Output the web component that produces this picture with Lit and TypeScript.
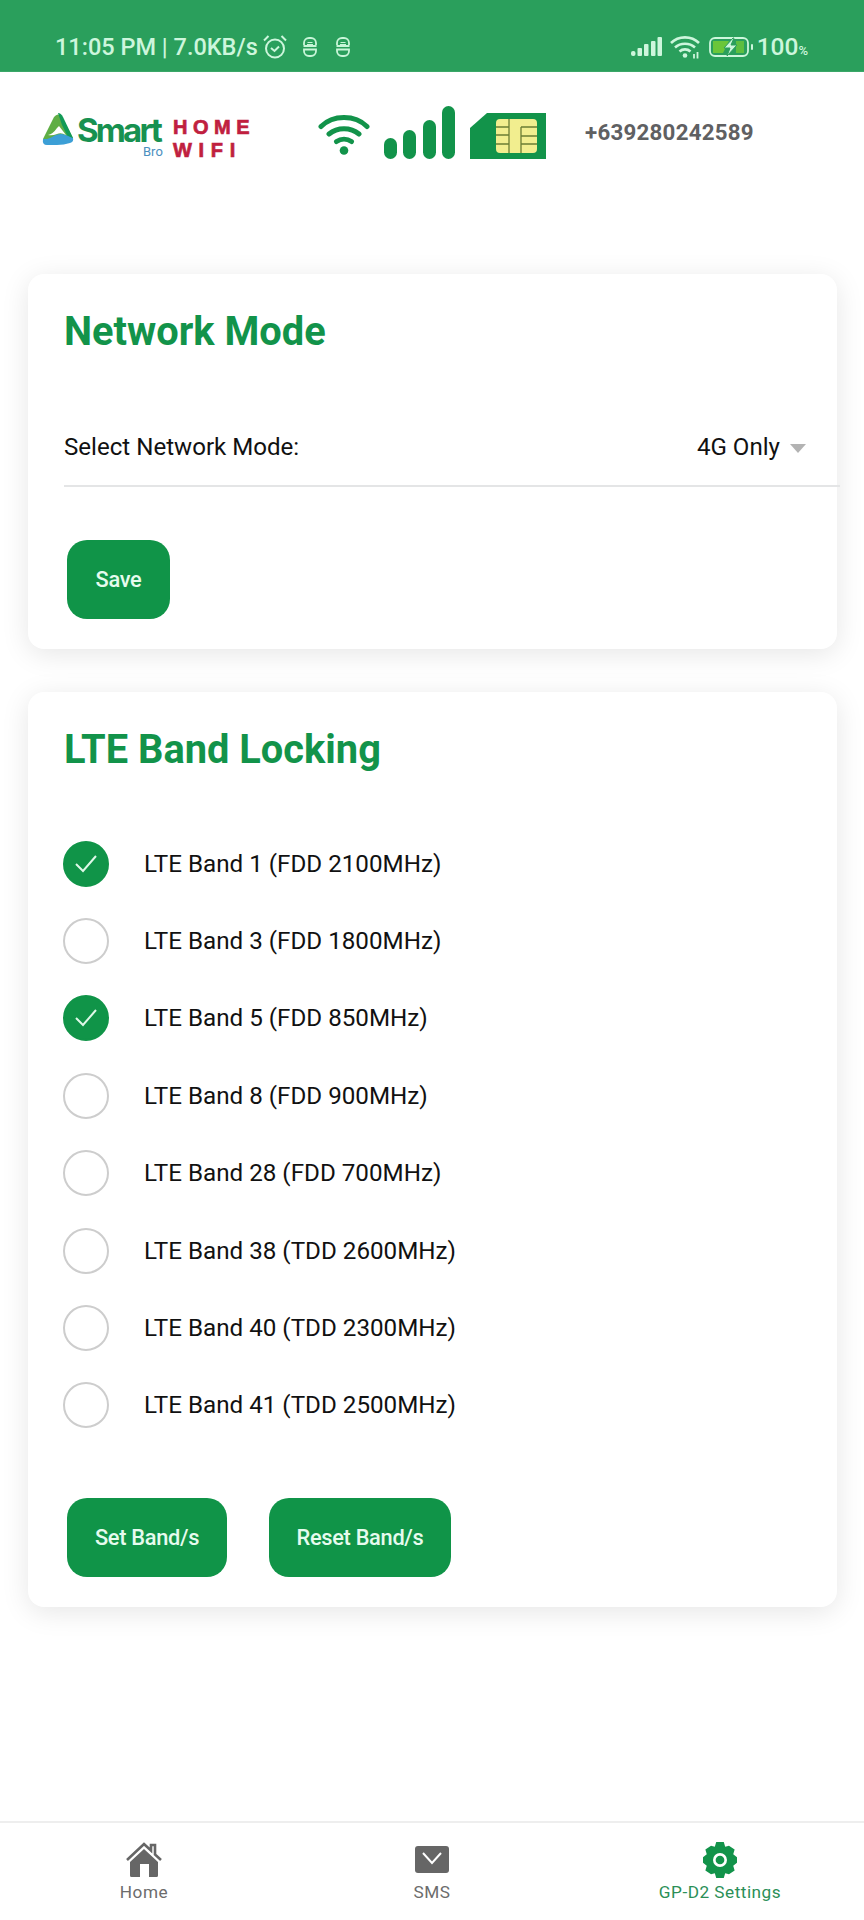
import { LitElement, html, css, svg } from "lit";
import { customElement } from "lit/decorators.js";

const bands = [
  ["LTE Band 1 (FDD 2100MHz)", true],
  ["LTE Band 3 (FDD 1800MHz)", false],
  ["LTE Band 5 (FDD 850MHz)", true],
  ["LTE Band 8 (FDD 900MHz)", false],
  ["LTE Band 28 (FDD 700MHz)", false],
  ["LTE Band 38 (TDD 2600MHz)", false],
  ["LTE Band 40 (TDD 2300MHz)", false],
  ["LTE Band 41 (TDD 2500MHz)", false],
] as const;

const sIcon = html`<svg width="16" height="20" viewBox="0 0 16 20" fill="none" stroke="#c8f5d8" stroke-width="1.800"><path d="M2 8V6a5 5 0 0 1 5-5h2a5 5 0 0 1 5 5v2M1.500 9h13M2 12.500h12V14a5 5 0 0 1-5 5H7a5 5 0 0 1-5-5z"/><path d="M5.500 5.500h5M5 7.500h6" stroke-width="1.200"/></svg>`;

@customElement("app-root")
export class AppRoot extends LitElement {
  static styles = css`
    :host { display: flex; flex-direction: column; width: 864px; height: 1920px; background: #fff; font-family: Roboto, "Liberation Sans", sans-serif; color: #111; overflow: hidden; }
    .status { height: 72px; box-sizing: border-box; background: #2a9f5c; display: flex; align-items: center; padding: 22px 0 0 55px; color: #cdf6dc; font-size: 23.5px; font-weight: 500; border-bottom: 1px solid #3aa768; flex: none; }
    .time { white-space: nowrap; }
    .st-left { display: flex; align-items: center; }
    .alarm { margin-left: 4px; }
    .s1 { margin-left: 14px; display: flex; }
    .s2 { margin-left: 17px; display: flex; }
    .st-right { margin-left: auto; margin-right: 56px; display: flex; align-items: center; }
    .pct { font-size: 24.5px; font-weight: 500; margin-left: 2px; }
    .pct small { font-size: 13px; }
    .head { height: 78px; flex: none; display: flex; align-items: center; padding: 21px 0 0 41px; }
    .logo { width: 277px; flex: none; display: flex; align-items: flex-start; margin-top: 8px; }
    .wifi-words { font-family: "Liberation Sans", sans-serif; font-weight: 700; color: #c01f3f; font-size: 20px; line-height: 23px; margin: 6px 0 0 6px; letter-spacing: 5.5px; -webkit-text-stroke: 0.7px #c01f3f; }
    .wifi-words div:last-child { letter-spacing: 6.7px; }
    .net { display: flex; align-items: flex-end; }
    .w { margin-bottom: 4px; }
    .bars { margin-left: 14px; }
    .sim { margin-left: 15px; }
    .phone { margin-left: 39px; color: #5f6062; font-size: 22.3px; font-weight: 700; letter-spacing: 0.25px; }
    .main { display: flex; flex-direction: column; gap: 43px; padding: 103px 27px 0 28px; flex: 1; }
    .card { background: #fff; border-radius: 16px; box-shadow: 0 5px 28px rgba(0,0,0,.1); padding: 35px 0 30px 36px; }
    .title { margin: 0; color: #12934a; font-size: 39.8px; line-height: 46px; font-weight: 700; }
    .select { margin-top: 58px; height: 74px; box-sizing: border-box; margin-right: -3px; border-bottom: 2px solid #e4e5e6; display: flex; align-items: center; justify-content: space-between; padding: 0 34px 4px 0; font-size: 24.1px; line-height: 28px; }
    .val { display: flex; align-items: center; gap: 10px; }
    .caret { width: 0; height: 0; border-left: 8.5px solid transparent; border-right: 8.5px solid transparent; border-top: 9px solid #b3b3b3; margin-top: 2px; }
    .btns { display: flex; gap: 42px; padding-left: 3px; }
    .btn { height: 79px; border-radius: 20px; background: #109448; color: #e6fbee; display: flex; align-items: center; justify-content: center; font-size: 21.8px; font-weight: 500; letter-spacing: -0.3px; }
    .b-save { width: 103px; margin-top: 53px; }
    .b-set { width: 160px; }
    .b-reset { width: 182px; }
    .bands { margin-top: 52px; margin-bottom: 54px; display: flex; flex-direction: column; }
    .row { height: 77.4px; display: flex; align-items: center; gap: 35px; font-size: 24.2px; }
    .c { width: 46px; height: 46px; margin-left: -1px; box-sizing: border-box; border-radius: 50%; border: 2px solid #cdcdcd; display: flex; align-items: center; justify-content: center; flex: none; }
    .c.on { background: #109448; border-color: #109448; }
    .nav { height: 97px; flex: none; border-top: 2px solid #eeeeee; display: grid; grid-template-columns: repeat(3, 1fr); }
    .item { display: flex; flex-direction: column; align-items: center; color: #6c6c6c; font-size: 17.2px; letter-spacing: 0.5px; padding-top: 18px; }
    .item.on { color: #2b8f57; }
    .ico { height: 37px; display: flex; align-items: center; justify-content: center; }
    .lbl { margin-top: 4px; line-height: 20px; }
  `;

  render() {
    return html`
      <div class="status">
        <div class="st-left">
          <span class="time">11:05 PM | 7.0KB/s</span>
          <svg class="alarm" width="26" height="26" viewBox="0 0 26 26" fill="none" stroke="#cdf6dc" stroke-width="2"><circle cx="13" cy="14.500" r="9"/><path d="M9 14l3.500 3L17 12.500M2 6.500 6.500 2M24 6.500 19.500 2"/></svg>
          <span class="s1">${sIcon}</span><span class="s2">${sIcon}</span>
        </div>
        <div class="st-right">
          <svg width="31" height="20" viewBox="0 0 31 20" fill="#cdf6dc"><rect x="0" y="14" width="4.500" height="5" rx="2"/><rect x="6.500" y="11" width="4.500" height="8" rx="1"/><rect x="13" y="7" width="4.500" height="12" rx="1"/><rect x="20" y="4" width="4.500" height="15" rx="1"/><rect x="26.500" y="0" width="4.500" height="19" rx="1"/></svg>
          <svg style="margin-left:8px" width="30" height="24" viewBox="0 0 30 24" fill="none" stroke="#cdf6dc" stroke-width="2.600"><path d="M1 8C8.500.500 21.500.500 29 8M5 12.500c5.500-5 14.500-5 20 0M9.500 16.500c3.200-2.800 7.800-2.800 11 0"/><circle cx="15" cy="20.500" r="2.300" fill="#cdf6dc" stroke="none"/><path d="M24 19v4.500M27.500 17v6.500" stroke-width="1.800"/></svg>
          <svg style="margin-left:9px" width="46" height="22" viewBox="0 0 46 22"><rect x="1" y="2" width="38" height="18" rx="5" fill="none" stroke="#cdf6dc" stroke-width="1.800"/><path d="M4 5h16l-6 12H4z" fill="#6bc63a"/><path d="M27 5h8v12h-8z" fill="#6bc63a" opacity=".8"/><path d="M24 2 15 12h6l-3 8 10-11h-6l3-7z" fill="#cdf6dc" stroke="#2a9f5c" stroke-width="1"/><rect x="42" y="8" width="2" height="6" rx="1" fill="#cdf6dc"/></svg>
          <span class="pct">100<small>%</small></span>
        </div>
      </div>

      <div class="head">
        <div class="logo">
          <svg width="126" height="48" viewBox="0 0 126 48">
            <path d="M2 29 13 7q4-5 8 0l11 21q-7-3-14-1-8 3-16 2z" fill="#5fae45"/>
            <path d="M17 3q3 0 5 4l10 21q-2 1-5-1l-6-12z" fill="#129a56"/>
            <path d="M2 29c8 1 11-5 18-5 5 0 8 3 12 4q1 4-3 5-6 2-13 2H6q-5 0-4-6z" fill="#3c9fd6"/>
            <path d="M7 25q5-1 9-7l2-2 7 9q-5-3-9-1-5 2-9 1z" fill="#fff"/>
            <text x="36" y="32" font-family="Inter, Roboto, sans-serif" font-size="33" font-weight="700" letter-spacing="-2.800" fill="#179150">Smart</text>
            <text x="102" y="46" font-family="Roboto, sans-serif" font-size="13" fill="#4b8fbf">Bro</text>
          </svg>
          <div class="wifi-words"><div>HOME</div><div>WIFI</div></div>
        </div>
        <div class="net">
          <svg class="w" width="52" height="41" viewBox="0 0 52 41" fill="none" stroke="#12934a" stroke-width="5" stroke-linecap="round"><path d="M3 12.500C15 .500 37 .500 49 12.500M11 20c8.500-7 21.500-7 30 0M18.500 27.500c4.500-3 10.500-3 15 0"/><circle cx="26" cy="36.500" r="4.300" fill="#12934a" stroke="none"/></svg>
          <svg class="bars" width="71" height="53" viewBox="0 0 71 53" fill="#12934a"><rect x="0" y="32" width="13" height="21" rx="6.500"/><rect x="19" y="24" width="13" height="29" rx="6.500"/><rect x="39" y="14" width="13" height="39" rx="6.500"/><rect x="58" y="0" width="13" height="53" rx="6.500"/></svg>
          <svg class="sim" width="76" height="46" viewBox="0 0 76 46"><path d="M17 0h59v46H0V15z" fill="#12934a"/><rect x="26" y="6" width="41" height="34" rx="4" fill="#f2ee8f"/><path d="M26 14h13M26 22h13M26 31h13M39 6v34M51 14h16M51 23h16M51 31h16M51 14v26M39 6" stroke="#6b7d35" stroke-width="1.300" fill="none"/></svg>
        </div>
        <div class="phone">+639280242589</div>
      </div>

      <div class="main">
        <section class="card">
          <h2 class="title">Network Mode</h2>
          <div class="select"><span>Select Network Mode:</span><span class="val">4G Only<i class="caret"></i></span></div>
          <div class="btns"><div class="btn b-save">Save</div></div>
        </section>
        <section class="card">
          <h2 class="title">LTE Band Locking</h2>
          <div class="bands">
            ${bands.map(([label, on]) => html`<div class="row">
              <span class="c ${on ? "on" : ""}">${on ? svg`<svg width="26" height="22" viewBox="0 0 26 22" fill="none" stroke="#dff8e8" stroke-width="2"><path d="M3 11l7 7L23 3"/></svg>` : ""}</span>
              <span>${label}</span>
            </div>`)}
          </div>
          <div class="btns"><div class="btn b-set">Set Band/s</div><div class="btn b-reset">Reset Band/s</div></div>
        </section>
      </div>

      <nav class="nav">
        <div class="item"><span class="ico"><svg width="36" height="35" viewBox="0 0 36 35" fill="#666"><path d="M4 20 18 7l14 13v13.500a1.500 1.500 0 0 1-1.500 1.500H23V22h-9v13H5.500A1.500 1.500 0 0 1 4 33.500z"/><path d="M1 18 18 2l7 6.500V3h4v9.500l6 5.500" fill="none" stroke="#666" stroke-width="2.600"/></svg></span><span class="lbl">Home</span></div>
        <div class="item"><span class="ico"><svg width="34" height="27" viewBox="0 0 34 27"><rect width="34" height="27" rx="3" fill="#666"/><path d="M8 7l9 10 9-10" fill="none" stroke="#fff" stroke-width="2"/></svg></span><span class="lbl">SMS</span></div>
        <div class="item on"><span class="ico"><svg width="34" height="36" viewBox="0 0 36 38"><path d="M14 0h8l1.500 5 4-1 6 4-1.500 5 4 3v6l-4 3 1.500 5-6 4-4-1-1.500 5h-8l-1.500-5-4 1-6-4 1.500-5-4-3v-6l4-3-1.500-5 6-4 4 1z" fill="#12934a"/><circle cx="18" cy="19" r="6" fill="none" stroke="#fff" stroke-width="2.800"/></svg></span><span class="lbl">GP-D2 Settings</span></div>
      </nav>
    `;
  }
}
